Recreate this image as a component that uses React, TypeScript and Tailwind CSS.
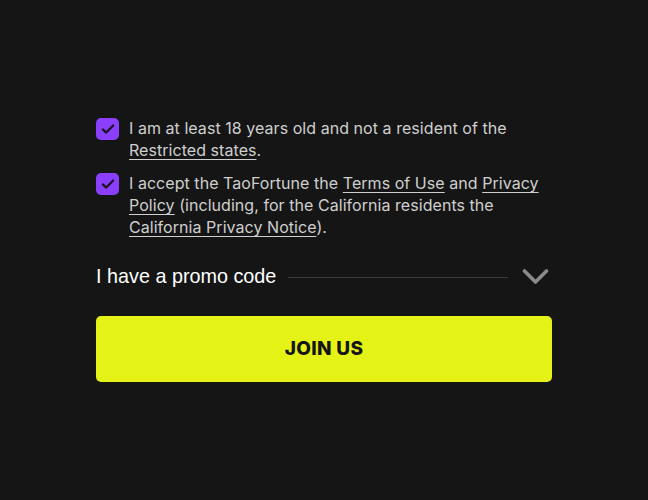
import React from "react";

function Check() {
  return (
    <div className="mt-[1px] flex h-[22px] w-[23px] shrink-0 items-center justify-center rounded-[5px] bg-[#8a3ffc]">
      <svg width="16" height="16" viewBox="0 0 16 16" fill="none">
        <path d="M2.8 8.4 L6.2 11.6 L13.2 4.4" stroke="#1a1320" strokeWidth="2.2" strokeLinecap="round" strokeLinejoin="round" />
      </svg>
    </div>
  );
}

export default function App() {
  return (
    <div className="flex h-[500px] w-[648px] flex-col bg-[#151515] px-[96px] pt-[117px]" style={{ fontFamily: "Inter, 'Noto Sans', sans-serif" }}>
      <div className="flex gap-[10px]">
        <Check />
        <p className="text-[16px] leading-[22px] tracking-[0.05px] text-[#cfcfcf]">
          I am at least 18 years old and not a resident of the{" "}
          <span className="underline underline-offset-[3px]">Restricted states</span>.
        </p>
      </div>
      <div className="mt-[11px] flex gap-[10px]">
        <Check />
        <p className="text-[16px] leading-[22px] tracking-[0.05px] text-[#cfcfcf]">
          I accept the TaoFortune the <span className="underline underline-offset-[3px]">Terms of Use</span> and{" "}
          <span className="underline underline-offset-[3px]">Privacy Policy</span> (including, for the California residents the{" "}
          <span className="underline underline-offset-[3px]">California Privacy Notice</span>).
        </p>
      </div>
      <div className="mt-[26px] flex h-[26px] items-center">
        <span className="text-[19.8px] text-white" style={{ fontFamily: "'Liberation Sans', Arial, sans-serif" }}>I have a promo code</span>
        <div className="ml-[12px] h-px flex-1 bg-[#3a3a3a]" />
        <svg className="ml-[14px] mr-[3px]" width="27" height="18" viewBox="0 0 27 18" fill="none">
          <path d="M2.5 3 L13.5 14 L24.5 3" stroke="#8a8a8a" strokeWidth="3.6" strokeLinecap="round" strokeLinejoin="round" />
        </svg>
      </div>
      <button className="mt-[26px] flex h-[66px] w-full items-center justify-center rounded-[5px] bg-[#e4f216] text-[19px] font-extrabold tracking-[0.3px] text-[#151515]">
        JOIN US
      </button>
    </div>
  );
}
